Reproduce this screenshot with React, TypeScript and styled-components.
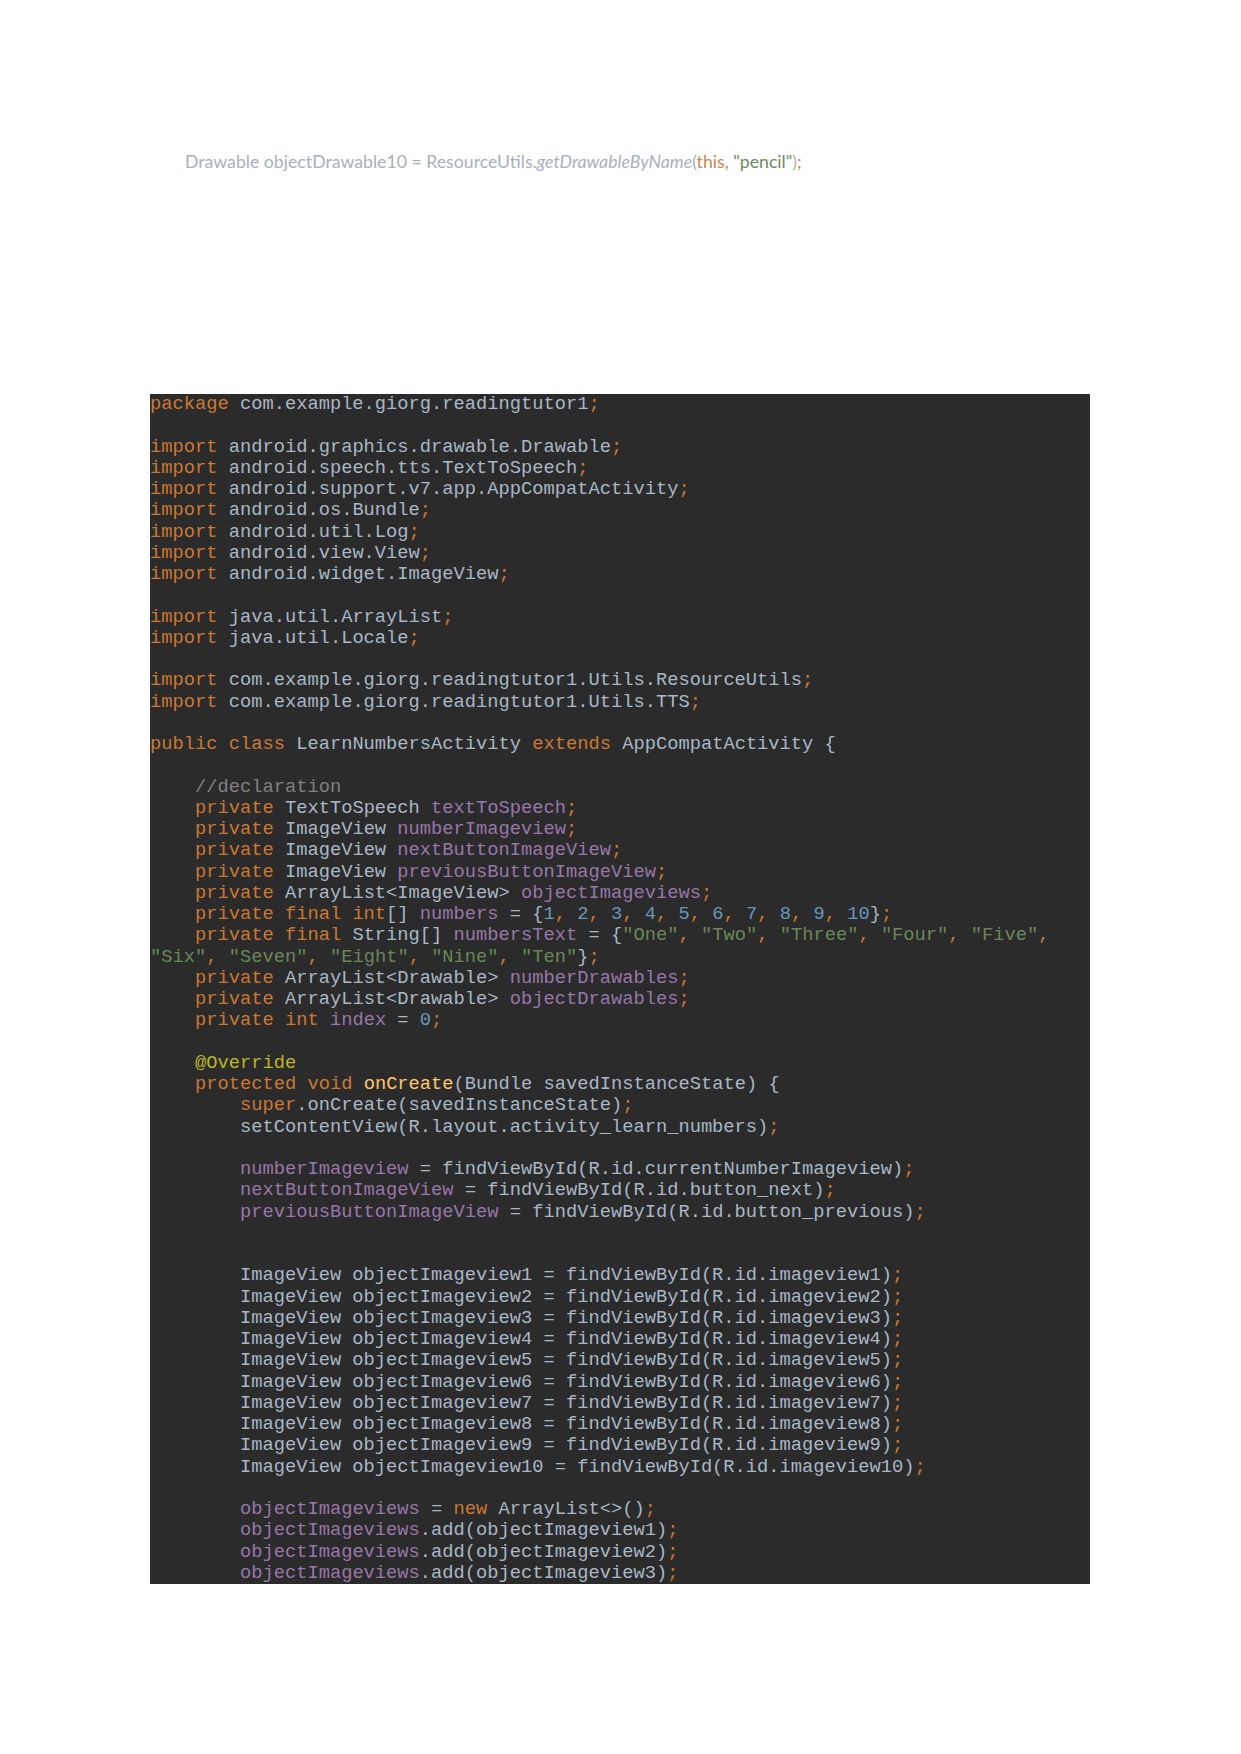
import React from "react";
import styled, { createGlobalStyle } from "styled-components";

const GlobalStyle = createGlobalStyle`
  html, body {
    margin: 0;
    padding: 0;
    background: #ffffff;
  }
`;

const Page = styled.div`
  width: 1241px;
  min-height: 1754px;
  background: #ffffff;
  padding: 150px 0 0 150px;
  box-sizing: border-box;
  display: flex;
  flex-direction: column;
`;

const Caption = styled.p`
  margin: 0 0 0 35px;
  font-family: Lato, "Open Sans", "Liberation Sans", sans-serif;
  font-size: 17.7px;
  line-height: 24px;
  color: #a9b0bd;
  white-space: pre;
`;

const CaptionItalic = styled.span`
  font-style: italic;
`;

const CaptionTone = styled.span<{ $tone: "kw" | "str" }>`
  color: ${(p) => (p.$tone === "kw" ? "#c9884e" : "#6f8a5f")};
`;

const CodeBlock = styled.pre`
  margin: 220px 0 0 0;
  width: 940px;
  height: 1190px;
  overflow: hidden;
  background: #2b2b2b;
  color: #a9b7c6;
  font-family: "Liberation Mono", "DejaVu Sans Mono", monospace;
  font-size: 18.74px;
  line-height: 21.25px;
  display: flex;
  flex-direction: column;
`;

const Line = styled.div`
  height: 21.25px;
  white-space: pre;
`;

type Kind = "k" | "f" | "n" | "s" | "c" | "a" | "m";

const colors: Record<Kind, string> = {
  k: "#cc7832",
  f: "#9876aa",
  n: "#6897bb",
  s: "#6a8759",
  c: "#808080",
  a: "#bbb529",
  m: "#ffc66d",
};

const Token = styled.span<{ $kind: Kind }>`
  color: ${(p) => colors[p.$kind]};
`;

const renderLine = (src: string) => {
  const parts: React.ReactNode[] = [];
  const re = /«([kfnscam])\|([^»]*)»/g;
  let last = 0;
  let m: RegExpExecArray | null;
  let i = 0;
  while ((m = re.exec(src))) {
    if (m.index > last) parts.push(src.slice(last, m.index));
    parts.push(
      <Token key={i++} $kind={m[1] as Kind}>
        {m[2]}
      </Token>
    );
    last = m.index + m[0].length;
  }
  if (last < src.length) parts.push(src.slice(last));
  return parts.length ? parts : " ";
};

const semi = "«k|;»";
const nums = Array.from({ length: 10 }, (_, i) => `«n|${i + 1}»`).join("«k|, »");
const strs1 = ['"One"', '"Two"', '"Three"', '"Four"', '"Five"']
  .map((s) => `«s|${s}»`)
  .join("«k|, »");
const strs2 = ['"Six"', '"Seven"', '"Eight"', '"Nine"', '"Ten"']
  .map((s) => `«s|${s}»`)
  .join("«k|, »");

const code: string[] = [
  `«k|package» com.example.giorg.readingtutor1${semi}`,
  ``,
  `«k|import» android.graphics.drawable.Drawable${semi}`,
  `«k|import» android.speech.tts.TextToSpeech${semi}`,
  `«k|import» android.support.v7.app.AppCompatActivity${semi}`,
  `«k|import» android.os.Bundle${semi}`,
  `«k|import» android.util.Log${semi}`,
  `«k|import» android.view.View${semi}`,
  `«k|import» android.widget.ImageView${semi}`,
  ``,
  `«k|import» java.util.ArrayList${semi}`,
  `«k|import» java.util.Locale${semi}`,
  ``,
  `«k|import» com.example.giorg.readingtutor1.Utils.ResourceUtils${semi}`,
  `«k|import» com.example.giorg.readingtutor1.Utils.TTS${semi}`,
  ``,
  `«k|public class» LearnNumbersActivity «k|extends» AppCompatActivity {`,
  ``,
  `    «c|//declaration»`,
  `    «k|private» TextToSpeech «f|textToSpeech»${semi}`,
  `    «k|private» ImageView «f|numberImageview»${semi}`,
  `    «k|private» ImageView «f|nextButtonImageView»${semi}`,
  `    «k|private» ImageView «f|previousButtonImageView»${semi}`,
  `    «k|private» ArrayList<ImageView> «f|objectImageviews»${semi}`,
  `    «k|private final int»[] «f|numbers» = {${nums}}${semi}`,
  `    «k|private final» String[] «f|numbersText» = {${strs1}«k|,»`,
  `${strs2}}${semi}`,
  `    «k|private» ArrayList<Drawable> «f|numberDrawables»${semi}`,
  `    «k|private» ArrayList<Drawable> «f|objectDrawables»${semi}`,
  `    «k|private int» «f|index» = «n|0»${semi}`,
  ``,
  `    «a|@Override»`,
  `    «k|protected void» «m|onCreate»(Bundle savedInstanceState) {`,
  `        «k|super».onCreate(savedInstanceState)${semi}`,
  `        setContentView(R.layout.activity_learn_numbers)${semi}`,
  ``,
  `        «f|numberImageview» = findViewById(R.id.currentNumberImageview)${semi}`,
  `        «f|nextButtonImageView» = findViewById(R.id.button_next)${semi}`,
  `        «f|previousButtonImageView» = findViewById(R.id.button_previous)${semi}`,
  ``,
  ``,
  ...Array.from(
    { length: 10 },
    (_, i) =>
      `        ImageView objectImageview${i + 1} = findViewById(R.id.imageview${i + 1})${semi}`
  ),
  ``,
  `        «f|objectImageviews» = «k|new» ArrayList<>()${semi}`,
  ...Array.from(
    { length: 3 },
    (_, i) => `        «f|objectImageviews».add(objectImageview${i + 1})${semi}`
  ),
];

export default function App() {
  return (
    <>
      <GlobalStyle />
      <Page>
        <Caption>
          Drawable objectDrawable10 = ResourceUtils.
          <CaptionItalic>getDrawableByName</CaptionItalic>(
          <CaptionTone $tone="kw">this, </CaptionTone>
          <CaptionTone $tone="str">"pencil"</CaptionTone>)
          <CaptionTone $tone="kw">;</CaptionTone>
        </Caption>
        <CodeBlock>
          {code.map((l, i) => (
            <Line key={i}>{renderLine(l)}</Line>
          ))}
        </CodeBlock>
      </Page>
    </>
  );
}
